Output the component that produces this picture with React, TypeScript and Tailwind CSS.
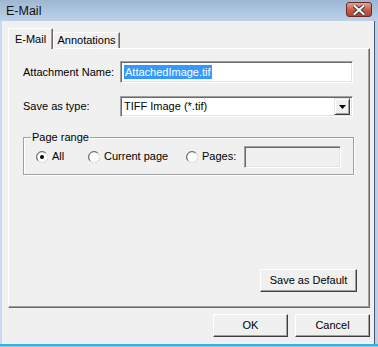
import React from 'react'

function Radio({ checked }: { checked?: boolean }) {
  return (
    <svg width="12" height="12" viewBox="0 0 12 12" className="shrink-0">
      <circle cx="6" cy="6" r="5.5" fill="#ffffff" stroke="#a0a0a0" />
      <path d="M2.2 9.8 A5.3 5.3 0 0 1 9.8 2.2" fill="none" stroke="#696969" strokeWidth="1" />
      <path d="M9.8 2.2 A5.3 5.3 0 0 1 2.2 9.8" fill="none" stroke="#ffffff" strokeWidth="1" />
      {checked && <circle cx="6" cy="6" r="2" fill="#000000" />}
    </svg>
  )
}

function Button({ text, className }: { text: string; className?: string }) {
  return (
    <div
      className={
        'flex items-center justify-center bg-[#f0f0f0] border border-t-white border-l-white border-r-[#404040] border-b-[#404040] shadow-[inset_-1px_-1px_0_#a0a0a0] ' +
        (className ?? '')
      }>
      {text}
    </div>
  )
}

export default function App() {
  return (
    <div className="w-[378px] h-[347px] flex flex-col bg-[#b9d1ea] text-[11px] text-black font-['Liberation_Sans',Arial,sans-serif] select-none">
      {/* title bar */}
      <div className="h-[21px] shrink-0 flex items-center justify-between pl-[6px] pr-[6px] bg-gradient-to-b from-[#9db6d3] to-[#bcd2ea]">
        <span className="text-[12.5px] leading-none text-[#111] pt-[1px]">E-Mail</span>
        <div className="w-[26px] h-[15px] mb-[2px] rounded-[3px] border border-[#6b2b22] bg-gradient-to-b from-[#e0a496] via-[#c7604b] to-[#b8412c] flex items-center justify-center">
          <svg width="12" height="10" viewBox="0 0 12 10">
            <path d="M1.5 1 L10.5 9 M10.5 1 L1.5 9" stroke="#3a3a3a" strokeWidth="4" strokeLinecap="square" />
            <path d="M1.5 1 L10.5 9 M10.5 1 L1.5 9" stroke="#ffffff" strokeWidth="2" strokeLinecap="square" />
          </svg>
        </div>
      </div>

      <div className="flex-1 flex">
        <div className="w-[2px] bg-[#c6d9ee]" />

        {/* client area */}
        <div className="flex-1 bg-[#f0f0f0] flex flex-col">
          {/* tabs */}
          <div className="h-[27px] flex items-end pl-[6px] relative z-10">
            <div className="w-[45px] h-[21px] -mb-[1px] bg-[#f0f0f0] border-t border-l border-white border-r border-r-[#696969] shadow-[inset_-1px_0_0_#a0a0a0] flex items-start justify-center pt-[2px]">
              E-Mail
            </div>
            <div className="w-[67px] h-[16px] border-t border-l border-white border-r border-r-[#696969] shadow-[inset_-1px_0_0_#a0a0a0] flex items-center justify-center">
              Annotations
            </div>
          </div>

          {/* tab panel */}
          <div className="ml-[6px] w-[362px] h-[260px] border border-t-white border-l-white border-r-[#696969] border-b-[#696969] shadow-[inset_-1px_-1px_0_#a0a0a0] flex flex-col px-[14px]">
            <div className="flex items-center mt-[12px] h-[22px]">
              <span className="w-[97px]">Attachment Name:</span>
              <div className="w-[233px] h-[22px] bg-white border border-t-[#a0a0a0] border-l-[#a0a0a0] border-r-white border-b-white shadow-[inset_1px_1px_0_#696969,inset_-1px_-1px_0_#e3e3e3] flex items-center pl-[3px]">
                <span className="bg-[#3399ff] text-white leading-[14px] px-[1px]">AttachedImage.tif</span>
              </div>
            </div>

            <div className="flex items-center mt-[13px] h-[21px]">
              <span className="w-[97px]">Save as type:</span>
              <div className="w-[233px] h-[21px] bg-white border border-t-[#a0a0a0] border-l-[#a0a0a0] border-r-white border-b-white shadow-[inset_1px_1px_0_#696969,inset_-1px_-1px_0_#e3e3e3] flex items-center justify-between pl-[3px] pr-[2px]">
                <span>TIFF Image (*.tif)</span>
                <div className="w-[16px] h-[17px] bg-[#f0f0f0] border border-t-[#e3e3e3] border-l-[#e3e3e3] border-r-[#404040] border-b-[#404040] shadow-[inset_1px_1px_0_#ffffff,inset_-1px_-1px_0_#a0a0a0] flex items-center justify-center">
                  <svg width="7" height="4" viewBox="0 0 7 4">
                    <path d="M0 0 H7 L3.5 4 Z" fill="#000" />
                  </svg>
                </div>
              </div>
            </div>

            {/* group box */}
            <div className="relative mt-[20px] w-[331px] h-[38px] border border-[#a0a0a0] shadow-[1px_1px_0_#ffffff,inset_1px_1px_0_#ffffff]">
              <span className="absolute -top-[8px] left-[7px] bg-[#f0f0f0] px-[1px] leading-[14px]">Page range</span>
              <div className="flex items-center h-full pt-[1px] pl-[12px]">
                <div className="flex items-center gap-[4px] w-[52px]">
                  <Radio checked />
                  <span>All</span>
                </div>
                <div className="flex items-center gap-[4px] w-[98px]">
                  <Radio />
                  <span>Current page</span>
                </div>
                <div className="flex items-center gap-[4px]">
                  <Radio />
                  <span>Pages:</span>
                </div>
                <div className="ml-[8px] w-[97px] h-[22px] border border-t-[#a0a0a0] border-l-[#a0a0a0] border-r-white border-b-white shadow-[inset_1px_1px_0_#696969,inset_-1px_-1px_0_#e3e3e3]" />
              </div>
            </div>

            <div className="flex-1" />
            <div className="flex justify-end mb-[15px]">
              <Button text="Save as Default" className="w-[97px] h-[23px] mr-[-2px]" />
            </div>
          </div>

          {/* dialog buttons */}
          <div className="flex justify-end gap-[7px] mt-[6px] pr-[4px]">
            <Button text="OK" className="w-[75px] h-[23px]" />
            <Button text="Cancel" className="w-[75px] h-[23px]" />
          </div>
        </div>

        <div className="w-[4px] border-l border-[#4a5868] bg-[#b9d1ea]" />
      </div>

      <div className="h-[3px] border-t-2 border-[#2db4e2] bg-[#9fc6df]" />
    </div>
  )
}
